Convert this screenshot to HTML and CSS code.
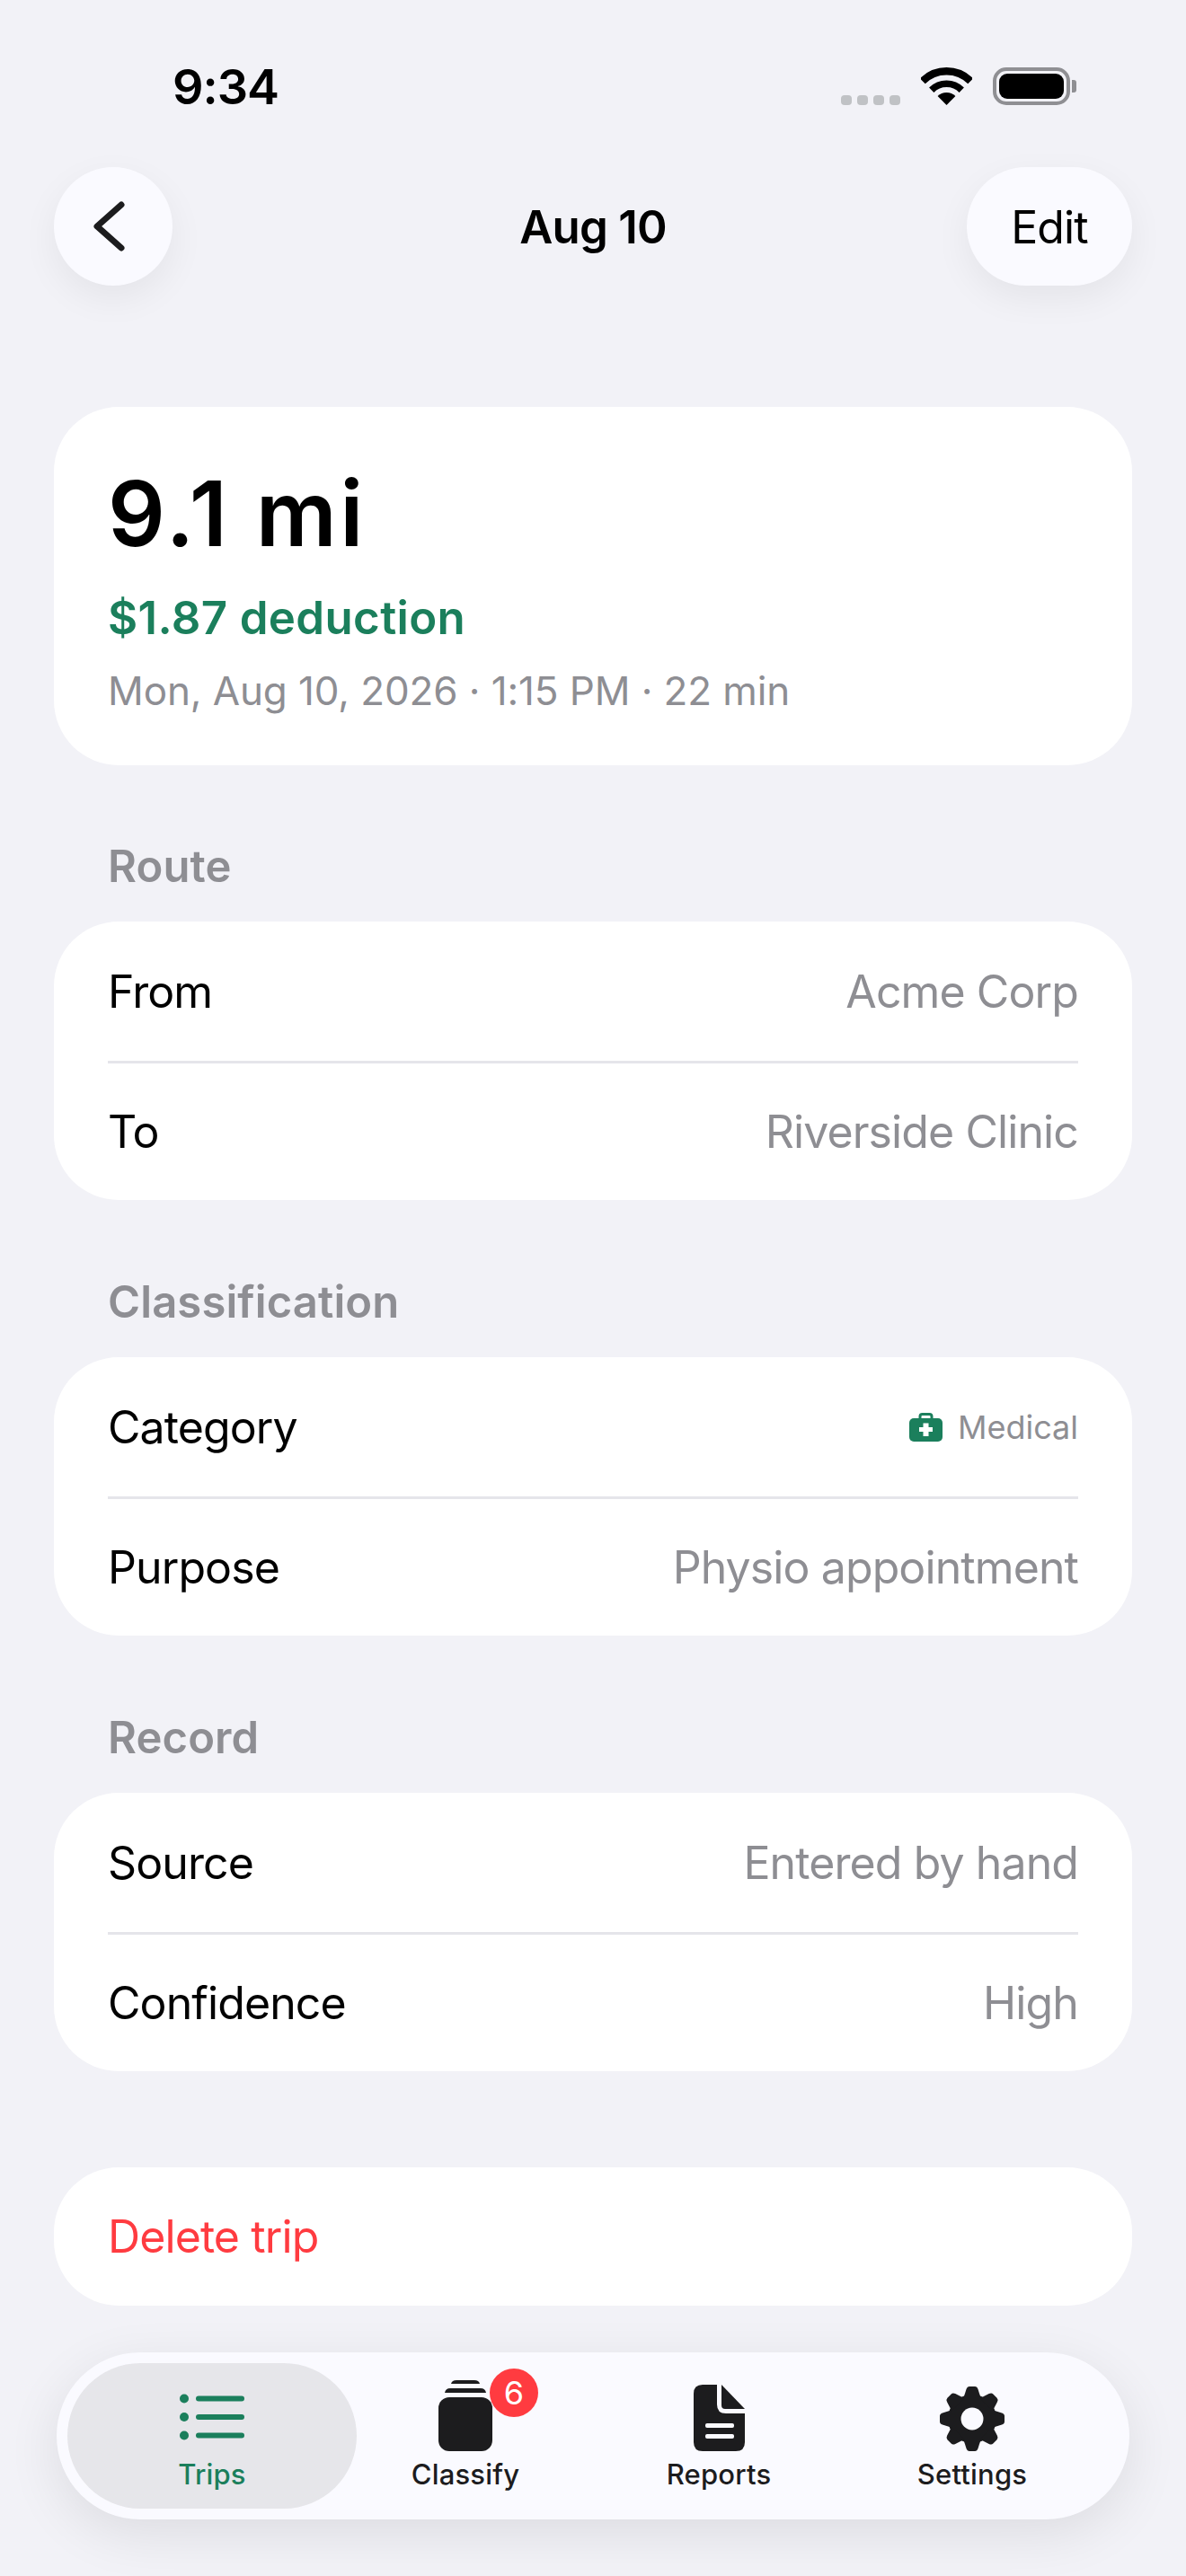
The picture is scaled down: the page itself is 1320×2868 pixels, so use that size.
FILE: index.html
```html
<!DOCTYPE html>
<html lang="en">
<head>
    <meta charset="UTF-8">
    <title>Aug 10</title>
    <link rel="stylesheet" href="styles.css">
</head>
<body>
    <div class="screen">
        <div class="status-bar">
            <span class="time">9:34</span>
            <div class="status-icons">
                <div class="signal"><i></i><i></i><i></i><i></i></div>
                <svg class="wifi" width="57" height="42" viewBox="0 0 57 42">
                    <path d="M1.8 15.3A37.8 37.8 0 0 1 55.2 15.3" fill="none" stroke="#000" stroke-width="8.3"/>
                    <path d="M11.74 25.24A23.7 23.7 0 0 1 45.26 25.24" fill="none" stroke="#000" stroke-width="7.5"/>
                    <path d="M28.5 42L18.6 32.1A14 14 0 0 1 38.4 32.1Z" fill="#000"/>
                </svg>
                <div class="battery"><div class="battery-fill"></div></div>
                <div class="battery-nub"></div>
            </div>
        </div>

        <nav class="nav">
            <button class="nav-btn back" aria-label="Back">
                <svg width="40" height="60" viewBox="0 0 40 60">
                    <path d="M35 6L8 30L35 54" fill="none" stroke="#1c1c1e" stroke-width="7" stroke-linecap="round" stroke-linejoin="round"/>
                </svg>
            </button>
            <h1 class="nav-title">Aug 10</h1>
            <button class="nav-btn edit">Edit</button>
        </nav>

        <section class="summary">
            <div class="distance">9.1 mi</div>
            <div class="deduction">$1.87 deduction</div>
            <div class="meta">Mon, Aug 10, 2026 · 1:15 PM · 22 min</div>
        </section>

        <section class="group">
            <h2 class="group-label">Route</h2>
            <div class="card">
                <div class="row"><span>From</span><span class="value">Acme Corp</span></div>
                <div class="row"><span>To</span><span class="value">Riverside Clinic</span></div>
            </div>
        </section>

        <section class="group">
            <h2 class="group-label">Classification</h2>
            <div class="card">
                <div class="row">
                    <span>Category</span>
                    <span class="tag">
                        <svg width="37" height="32" viewBox="0 0 37 32">
                            <path d="M12 7V4Q12 1.5 14.500 1.500H22.500Q25 1.500 25 4V7" fill="none" stroke="#1b7f5c" stroke-width="3"/>
                            <rect x="0" y="6" width="37" height="26" rx="5" fill="#1b7f5c"/>
                            <path d="M15.500 11.500H21.500V16H26V21H21.500V26H15.500V21H11V16H15.500Z" fill="#fff"/>
                        </svg>
                        <span>Medical</span>
                    </span>
                </div>
                <div class="row"><span>Purpose</span><span class="value">Physio appointment</span></div>
            </div>
        </section>

        <section class="group">
            <h2 class="group-label">Record</h2>
            <div class="card">
                <div class="row"><span>Source</span><span class="value">Entered by hand</span></div>
                <div class="row"><span>Confidence</span><span class="value">High</span></div>
            </div>
        </section>

        <button class="delete">Delete trip</button>

        <div class="tab-bar">
            <div class="tab active">
                <svg width="72" height="52" viewBox="0 0 72 52">
                    <ellipse cx="5" cy="5.500" rx="5" ry="5" fill="#1b7f5c"/>
                    <ellipse cx="5" cy="26" rx="5" ry="5" fill="#1b7f5c"/>
                    <ellipse cx="5" cy="46.500" rx="5" ry="5" fill="#1b7f5c"/>
                    <rect x="18" y="2.500" width="54" height="6" rx="3" fill="#1b7f5c"/>
                    <rect x="18" y="23" width="54" height="6" rx="3" fill="#1b7f5c"/>
                    <rect x="18" y="43.500" width="54" height="6" rx="3" fill="#1b7f5c"/>
                </svg>
                <span>Trips</span>
            </div>
            <div class="tab">
                <svg width="60" height="80" viewBox="0 0 60 80">
                    <path d="M14 5Q15 1 20 1H40Q45 1 46 5Z" fill="#1c1c1e"/>
                    <path d="M7 15Q8 10 13 10H47Q52 10 53 15Z" fill="#1c1c1e"/>
                    <rect x="0" y="20" width="60" height="60" rx="12" fill="#1c1c1e"/>
                </svg>
                <span>Classify</span>
                <div class="badge">6</div>
            </div>
            <div class="tab">
                <svg width="57" height="74" viewBox="0 0 57 74">
                    <path d="M10 0H26V22Q26 32 36 32H57V64Q57 74 47 74H10Q0 74 0 64V10Q0 0 10 0Z" fill="#1c1c1e"/>
                    <path d="M31 0L57 27H35Q31 27 31 23Z" fill="#1c1c1e"/>
                    <rect x="13" y="43" width="32" height="5" rx="2" fill="#fafaff"/>
                    <rect x="13" y="55" width="32" height="5" rx="2" fill="#fafaff"/>
                </svg>
                <span>Reports</span>
            </div>
            <div class="tab">
                <svg width="72" height="72" viewBox="-36 -36 72 72">
                    <circle r="27" fill="#1c1c1e"/>
                    <g fill="#1c1c1e">
                        <path id="tooth" d="M-10 -22L-6.500 -33Q-5.500 -36 -3 -36H3Q5.500 -36 6.500 -33L10 -22Z"/>
                        <use href="#tooth" transform="rotate(45)"/>
                        <use href="#tooth" transform="rotate(90)"/>
                        <use href="#tooth" transform="rotate(135)"/>
                        <use href="#tooth" transform="rotate(180)"/>
                        <use href="#tooth" transform="rotate(225)"/>
                        <use href="#tooth" transform="rotate(270)"/>
                        <use href="#tooth" transform="rotate(315)"/>
                    </g>
                    <circle r="12.500" fill="#fafaff"/>
                </svg>
                <span>Settings</span>
            </div>
        </div>
    </div>
</body>
</html>
```
FILE: styles.css
```css
:root {
    --bg-color: #f2f2f7;
    --text-color: #000000;
    --card-bg: #ffffff;
    --float-bg: #fafaff;
    --muted: #8e8e93;
    --green: #1b7f5c;
    --red: #ff3b40;
    --dark: #1c1c1e;
}
* {
    margin: 0;
    padding: 0;
    box-sizing: border-box;
}
body {
    font-family: 'Inter', 'Liberation Sans', sans-serif;
    background-color: var(--bg-color);
    color: var(--text-color);
}
button {
    font-family: inherit;
    border: none;
    cursor: pointer;
}
.screen {
    position: relative;
    width: 1320px;
    height: 2868px;
    overflow: hidden;
    padding: 0 60px;
}

/* status bar */
.status-bar {
    height: 186px;
    display: flex;
    justify-content: space-between;
    align-items: flex-start;
    padding: 64px 62px 0 132px;
}
.time {
    font-size: 54px;
    font-weight: 600;
    line-height: 65px;
    letter-spacing: -1px;
}
.status-icons {
    display: flex;
    align-items: flex-end;
    margin-top: 11px;
    height: 42px;
}
.signal {
    display: flex;
    gap: 6px;
    margin-right: 23px;
}
.signal i {
    display: block;
    width: 12px;
    height: 11px;
    border-radius: 4px;
    background-color: #c0c2c5;
}
.battery {
    margin-left: 23px;
    width: 86px;
    height: 42px;
    padding: 3px;
    border: 4px solid #8f8f93;
    border-radius: 15px;
}
.battery-fill {
    height: 100%;
    background-color: #000;
    border-radius: 9px;
}
.battery-nub {
    width: 5px;
    height: 14px;
    margin: 0 0 14px 2px;
    background-color: #8f8f93;
    border-radius: 0 3px 3px 0;
}

/* nav */
.nav {
    height: 132px;
    display: grid;
    grid-template-columns: 184px 1fr 184px;
    align-items: center;
}
.nav-btn {
    height: 132px;
    border-radius: 66px;
    background-color: var(--float-bg);
    box-shadow: 0 14px 40px rgba(0, 0, 0, 0.06);
    color: #000;
    font-size: 50px;
    letter-spacing: -0.9px;
}
.back {
    width: 132px;
    display: flex;
    align-items: center;
    padding-left: 40px;
}
.edit {
    width: 184px;
    padding-top: 2px;
}
.nav-title {
    padding-top: 2px;
    text-align: center;
    font-size: 51px;
    font-weight: 600;
    line-height: 60px;
    letter-spacing: -0.8px;
}

/* summary */
.summary {
    margin-top: 135px;
    height: 399px;
    padding: 59px 60px 0;
    background-color: var(--card-bg);
    border-radius: 72px;
}
.distance {
    font-size: 100px;
    font-weight: 600;
    line-height: 120px;
    letter-spacing: 3.3px;
}
.deduction {
    margin-top: 26px;
    font-size: 51px;
    font-weight: 600;
    line-height: 60px;
    letter-spacing: 0.35px;
    color: var(--green);
}
.meta {
    margin-top: 23px;
    font-size: 44px;
    line-height: 56px;
    letter-spacing: -0.1px;
    color: var(--muted);
}

/* grouped rows */
.group {
    margin-top: 84px;
}
.summary + .group {
    margin-top: 83px;
}
.group-label {
    padding-left: 60px;
    margin-bottom: 31px;
    font-size: 49px;
    font-weight: 600;
    line-height: 60px;
    letter-spacing: 0.1px;
    color: var(--muted);
}
.card {
    background-color: var(--card-bg);
    border-radius: 72px;
    padding: 0 60px;
}
.row {
    height: 155px;
    display: flex;
    justify-content: space-between;
    align-items: center;
    font-size: 50px;
    letter-spacing: -0.9px;
}
.row + .row {
    border-top: 3px solid #e5e5ea;
}
.value {
    color: var(--muted);
}
.tag {
    display: flex;
    align-items: center;
    gap: 17px;
    font-size: 36px;
    letter-spacing: 0;
    color: var(--muted);
}
.delete {
    display: block;
    width: 100%;
    height: 154px;
    margin-top: 107px;
    padding-left: 60px;
    text-align: left;
    font-size: 50px;
    letter-spacing: -0.9px;
    color: var(--red);
    background-color: var(--card-bg);
    border-radius: 72px;
}

/* floating tab bar */
.tab-bar {
    position: absolute;
    left: 63px;
    top: 2619px;
    width: 1194px;
    height: 186px;
    padding: 0 34px 0 32px;
    display: grid;
    grid-template-columns: repeat(4, 282px);
    background-color: var(--float-bg);
    border-radius: 93px;
    box-shadow: 0 16px 60px rgba(0, 0, 0, 0.09);
}
.tab {
    position: relative;
    height: 186px;
    display: flex;
    flex-direction: column;
    align-items: center;
    justify-content: flex-end;
    padding-bottom: 30px;
    font-size: 31px;
    font-weight: 500;
    line-height: 40px;
    letter-spacing: 0.2px;
    color: var(--dark);
}
.tab svg {
    position: relative;
    margin-bottom: 6px;
}
.tab span {
    position: relative;
}
.tab.active {
    color: var(--green);
}
.tab.active::before {
    content: "";
    position: absolute;
    top: 12px;
    bottom: 12px;
    left: -20px;
    right: -20px;
    background-color: #e6e6ea;
    border-radius: 81px;
}
.tab.active svg {
    margin-bottom: 18px;
}
.badge {
    position: absolute;
    top: 18px;
    left: 168px;
    width: 54px;
    height: 54px;
    border-radius: 50%;
    background-color: var(--red);
    color: #fff;
    font-size: 36px;
    font-weight: 400;
    line-height: 54px;
    text-align: center;
}
```
